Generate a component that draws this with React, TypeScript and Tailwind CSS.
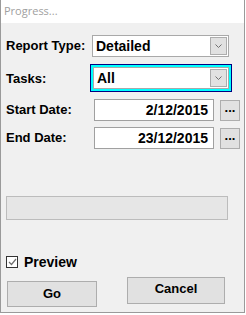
import React from 'react';

const font = { fontFamily: '"Liberation Sans", Arial, sans-serif' };

function Chevron() {
  return (
    <svg width="9" height="6" viewBox="0 0 9 6" fill="none">
      <path d="M1.5 1.5 L4.5 4.5 L7.5 1.5" stroke="#707070" strokeWidth="1" />
    </svg>
  );
}

function Combo({ value }: { value: string }) {
  return (
    <div className="flex h-[22px] w-full items-center border border-[#a9a9a9] bg-white pl-[3px] pr-[1px]">
      <span className="flex-1 text-[14px] font-bold leading-none text-black">{value}</span>
      <div className="flex h-[18px] w-[17px] items-center justify-center border border-[#adadad] bg-[#e1e1e1]">
        <Chevron />
      </div>
    </div>
  );
}

function DateRow({ label, value }: { label: string; value: string }) {
  return (
    <div className="flex h-[22px] items-center">
      <span className="w-[88px] text-[13px] font-bold text-black">{label}</span>
      <div className="flex h-[22px] w-[120px] items-center justify-end border border-[#a0a0a0] bg-white pr-[5px] text-[14px] font-bold text-black">
        {value}
      </div>
      <button className="ml-[6px] flex h-[21px] w-[20px] items-center justify-center border border-[#adadad] bg-[#e1e1e1] pb-[4px] text-[13px] font-bold text-black">
        ...
      </button>
    </div>
  );
}

export default function App() {
  return (
    <div className="h-[315px] w-[246px] overflow-hidden bg-white" style={font}>
      <div className="flex h-[313px] w-[245px] flex-col border-b border-l border-r border-[#9a9a9a]">
        <div className="flex h-[23px] items-center bg-white pl-[3px]">
          <span className="text-[11px] text-[#a0a0a0]" style={{ fontFamily: '"Open Sans", "Noto Sans", sans-serif' }}>
            Progress...
          </span>
        </div>
        <div className="flex flex-1 flex-col bg-[#f0f0f0] pl-[5px]">
          <div className="mt-[12px] flex items-center">
            <span className="w-[86px] text-[13px] font-bold text-black">Report Type:</span>
            <div className="w-[137px]">
              <Combo value="Detailed" />
            </div>
          </div>

          <div className="mt-[7px] flex items-start">
            <span className="mt-[5px] w-[84px] text-[13px] font-bold text-black">Tasks:</span>
            <div className="w-[142px] border border-[#000080] bg-[#00ffff] p-[2px]">
              <Combo value="All" />
            </div>
          </div>

          <div className="mt-[7px] flex flex-col gap-[6px]">
            <DateRow label="Start Date:" value="2/12/2015" />
            <DateRow label="End Date:" value="23/12/2015" />
          </div>

          <div className="mt-[47px] h-[24px] w-[222px] border border-[#bcbcbc] bg-[#e6e6e6]" />

          <label className="mt-[32px] flex h-[20px] items-center gap-[6px]">
            <span className="flex h-[12px] w-[12px] items-center justify-center border border-[#333333] bg-white">
              <svg width="9" height="8" viewBox="0 0 9 8" fill="none">
                <path d="M1 4 L3.5 6.5 L8 1" stroke="#707070" strokeWidth="1.2" />
              </svg>
            </span>
            <span className="text-[14px] font-bold text-black">Preview</span>
          </label>

          <div className="mt-[5px] flex items-start">
            <button className="ml-[1px] mt-[4px] h-[26px] w-[90px] border border-[#adadad] bg-[#e1e1e1] text-[13px] font-bold text-black">
              Go
            </button>
            <button className="ml-[30px] h-[27px] w-[98px] border border-[#adadad] bg-[#e1e1e1] pb-[3px] text-[13px] font-bold text-black">
              Cancel
            </button>
          </div>
        </div>
      </div>
    </div>
  );
}
